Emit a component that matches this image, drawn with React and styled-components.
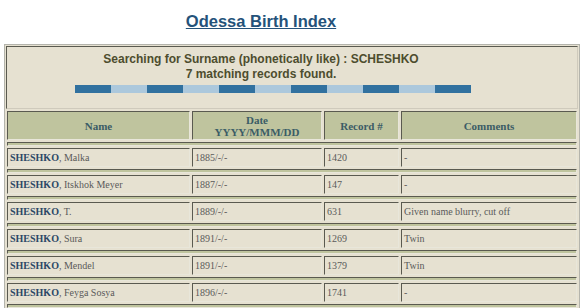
import React from 'react';
import styled, { createGlobalStyle } from 'styled-components';

const GlobalStyle = createGlobalStyle`
    body {
        margin: 0;
        background: #ffffff;
    }
`;

const Page = styled.div`
    width: 584px;
    padding: 0 4px;
    box-sizing: border-box;
`;

const Title = styled.h1`
    margin: 0;
    padding: 12px 62px 0 0;
    height: 44px;
    box-sizing: border-box;
    text-align: center;
    font-family: "Liberation Sans", Arial, sans-serif;
    font-size: 16.5px;
    font-weight: bold;
    color: #24527a;
    text-decoration: underline;
`;

const Frame = styled.div`
    border: 1px solid #b4b4ac;
    background: #e6e1d1;
`;

const SearchBox = styled.div`
    margin: 1px 1px 0;
    height: 63px;
    border: 1px solid;
    border-color: #5a5a50 #cfcabc #cfcabc #5a5a50;
    display: flex;
    flex-direction: column;
    align-items: center;
    padding: 5px 62px 0 0;
    box-sizing: border-box;
    font-family: "Liberation Sans", Arial, sans-serif;
    font-size: 12px;
    font-weight: bold;
    color: #4d4d2e;
    line-height: 15px;
`;

const Bar = styled.div`
    display: flex;
    margin: 3px 0 0 24px;
`;

const Dash = styled.div`
    width: 36px;
    height: 8px;
    background: ${props => props.dark ? '#31719f' : '#acc8dc'};
`;

const Table = styled.table`
    width: 100%;
    border-collapse: separate;
    border-spacing: 2px;
    background: #e6e1d1;
    font-family: "Liberation Serif", "Times New Roman", serif;
`;

const Th = styled.th`
    background: #bfc49e;
    border: 1px solid;
    border-color: #5a5a50 #e8e6da #e8e6da #5a5a50;
    height: 27px;
    padding: 0;
    font-size: 11px;
    font-weight: bold;
    color: #3b5c66;
    line-height: 12px;
`;

const Spacer = styled.td`
    background: #bfc49e;
    border: 1px solid;
    border-color: #5a5a50 #e8e6da #e8e6da #5a5a50;
    height: 2px;
    padding: 0;
`;

const Td = styled.td`
    background: #e6e1d1;
    border: 1px solid;
    border-color: #5a5a50 #e8e6da #e8e6da #5a5a50;
    height: 17px;
    padding: 0 2px;
    font-size: 10px;
    color: #5a5a5a;
`;

const Surname = styled.b`
    color: #2c4866;
`;

const records = [
    { given: 'Malka', date: '1885/-/-', rec: '1420', note: '-' },
    { given: 'Itskhok Meyer', date: '1887/-/-', rec: '147', note: '-' },
    { given: 'T.', date: '1889/-/-', rec: '631', note: 'Given name blurry, cut off' },
    { given: 'Sura', date: '1891/-/-', rec: '1269', note: 'Twin' },
    { given: 'Mendel', date: '1891/-/-', rec: '1379', note: 'Twin' },
    { given: 'Feyga Sosya', date: '1896/-/-', rec: '1741', note: '-' },
];

export default function App() {
    return (
        <Page>
            <GlobalStyle />
            <Title>Odessa Birth Index</Title>
            <Frame>
                <SearchBox>
                    <div>Searching for Surname (phonetically like) : SCHESHKO</div>
                    <div>7 matching records found.</div>
                    <Bar>
                        {[...Array(11)].map((_, i) => (
                            <Dash key={i} dark={i % 2 === 0} />
                        ))}
                    </Bar>
                </SearchBox>
                <Table>
                    <tbody>
                        <tr>
                            <Th style={{ width: 181 }}>Name</Th>
                            <Th style={{ width: 128 }}>Date<br />YYYY/MMM/DD</Th>
                            <Th style={{ width: 73 }}>Record #</Th>
                            <Th>Comments</Th>
                        </tr>
                        {records.map((r, i) => (
                            <React.Fragment key={i}>
                                <tr><Spacer colSpan={4} /></tr>
                                <tr>
                                    <Td><Surname>SHESHKO</Surname>, {r.given}</Td>
                                    <Td>{r.date}</Td>
                                    <Td>{r.rec}</Td>
                                    <Td>{r.note}</Td>
                                </tr>
                            </React.Fragment>
                        ))}
                        <tr><Spacer colSpan={4} /></tr>
                    </tbody>
                </Table>
            </Frame>
        </Page>
    );
}
